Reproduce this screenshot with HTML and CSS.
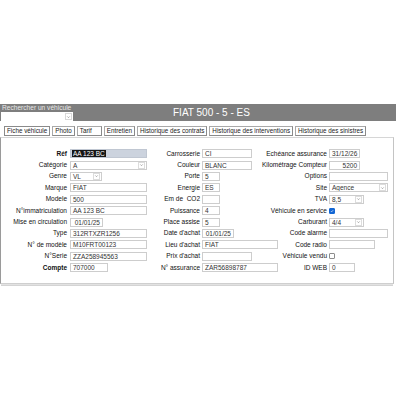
FILE: index.html
```html
<!DOCTYPE html>
<html lang="fr">
<head>
<meta charset="utf-8">
<title>FIAT 500 - 5 - ES</title>
<link rel="stylesheet" href="styles.css">
</head>
<body>
<div class="app">
  <div class="topbar">
    <div class="search">
      <div class="search-label">Rechercher un véhicule</div>
      <div class="combo"><span class="arrow"><svg viewBox="0 0 6 6" width="6" height="6"><path d="M1.5 2.3 L3 3.8 L4.5 2.3" fill="none" stroke="#777" stroke-width="0.7"/></svg></span></div>
    </div>
    <div class="title">FIAT 500 - 5 - ES</div>
  </div>

  <div class="tabs">
    <div class="tab active">Fiche véhicule</div>
    <div class="tab">Photo</div>
    <div class="tab tab-wide">Tarif</div>
    <div class="tab">Entretien</div>
    <div class="tab">Historique des contrats</div>
    <div class="tab">Historique des interventions</div>
    <div class="tab">Historique des sinistres</div>
  </div>

  <div class="panel">
    <div class="form">
      <div class="col col1">
        <label class="bold"><span>Réf</span></label><div class="field w77 sel-field"><span class="sel">AA 123 BC</span></div>
        <label><span>Catégorie</span></label><div class="field w77 select">A<span class="arrow"><svg viewBox="0 0 6 6" width="6" height="6"><path d="M1.5 2.3 L3 3.8 L4.5 2.3" fill="none" stroke="#777" stroke-width="0.7"/></svg></span></div>
        <label><span>Genre</span></label><div class="field w32 select">VL<span class="arrow"><svg viewBox="0 0 6 6" width="6" height="6"><path d="M1.5 2.3 L3 3.8 L4.5 2.3" fill="none" stroke="#777" stroke-width="0.7"/></svg></span></div>
        <label><span>Marque</span></label><div class="field w77">FIAT</div>
        <label><span>Modele</span></label><div class="field w77">500</div>
        <label><span>N°immatriculation</span></label><div class="field w77">AA 123 BC</div>
        <label><span>Mise en circulation</span></label><div class="field w33 right">01/01/25</div>
        <label><span>Type</span></label><div class="field w77">312RTXZR1256</div>
        <label><span>N° de modèle</span></label><div class="field w77">M10FRT00123</div>
        <label><span>N°Serie</span></label><div class="field w77">ZZA258945563</div>
        <label class="bold"><span>Compte</span></label><div class="field w38">707000</div>
      </div>

      <div class="col col2">
        <label><span>Carrosserie</span></label><div class="field w50">CI</div>
        <label><span>Couleur</span></label><div class="field w50">BLANC</div>
        <label><span>Porte</span></label><div class="field w18">5</div>
        <label><span>Energie</span></label><div class="field w18">ES</div>
        <label><span>Em de&nbsp; CO2</span></label><div class="field w18"></div>
        <label><span>Puissance</span></label><div class="field w18">4</div>
        <label><span>Place assise</span></label><div class="field w18">5</div>
        <label><span>Date d'achat</span></label><div class="field w32 right">01/01/25</div>
        <label><span>Lieu d'achat</span></label><div class="field w76">FIAT</div>
        <label><span>Prix d'achat</span></label><div class="field w50"></div>
        <label><span>N° assurance</span></label><div class="field w76">ZAR56898787</div>
      </div>

      <div class="col col3">
        <label><span>Echéance assurance</span></label><div class="field w31 right">31/12/26</div>
        <label><span>Kilométrage Compteur</span></label><div class="field w31 right">5200</div>
        <label><span>Options</span></label><div class="field w59"></div>
        <label><span>Site</span></label><div class="field w59 select">Agence<span class="arrow"><svg viewBox="0 0 6 6" width="6" height="6"><path d="M1.5 2.3 L3 3.8 L4.5 2.3" fill="none" stroke="#777" stroke-width="0.7"/></svg></span></div>
        <label><span>TVA</span></label><div class="field w35 select">8,5<span class="arrow"><svg viewBox="0 0 6 6" width="6" height="6"><path d="M1.5 2.3 L3 3.8 L4.5 2.3" fill="none" stroke="#777" stroke-width="0.7"/></svg></span></div>
        <label><span>Véhicule en service</span></label><div class="check checked"><svg viewBox="0 0 6 6" width="6" height="6"><path d="M1.2 3 L2.5 4.3 L4.8 1.7" fill="none" stroke="#fff" stroke-width="0.9"/></svg></div>
        <label><span>Carburant</span></label><div class="field w35 select">4/4<span class="arrow"><svg viewBox="0 0 6 6" width="6" height="6"><path d="M1.5 2.3 L3 3.8 L4.5 2.3" fill="none" stroke="#777" stroke-width="0.7"/></svg></span></div>
        <label><span>Code alarme</span></label><div class="field w59"></div>
        <label><span>Code radio</span></label><div class="field w46"></div>
        <label><span>Véhicule vendu</span></label><div class="check"></div>
        <label><span>ID WEB</span></label><div class="field w26">0</div>
      </div>
    </div>
  </div>
</div>
</body>
</html>
```

FILE: styles.css
```css
* { box-sizing: border-box; }

html, body {
  margin: 0;
  padding: 0;
  background: #ffffff;
}

body {
  font-family: "Liberation Sans", Arial, sans-serif;
  color: #111;
}

.app {
  width: 396px;
  height: 396px;
  padding-top: 104px;
}

/* top bar */
.topbar {
  height: 17px;
  background: #7e7e7e;
  display: flex;
  align-items: stretch;
}

.search {
  width: 74px;
  display: flex;
  flex-direction: column;
  padding-left: 1px;
}

.search-label {
  font-size: 6.6px;
  line-height: 7px;
  color: #e8e8e8;
  padding-left: 1px;
  height: 7px;
  white-space: nowrap;
}

.combo {
  margin-top: 1px;
  height: 9px;
  width: 72px;
  background: #fff;
  position: relative;
}

.combo .arrow {
  position: absolute;
  right: 1px;
  top: 1px;
  width: 7px;
  height: 7px;
  border: 1px solid #d8d8d8;
  display: flex;
  align-items: center;
  justify-content: center;
}

.title {
  margin-left: 99px;
  font-size: 10px;
  line-height: 17px;
  color: #ffffff;
}

/* tabs */
.tabs {
  display: flex;
  gap: 2px;
  padding: 5px 0 0 4px;
  height: 16px;
}

.tab {
  height: 10px;
  padding: 0 2px;
  border: 1px solid #a9a9a9;
  border-right-color: #8a8a8a;
  border-bottom-color: #8a8a8a;
  background: #ffffff;
  font-size: 6.3px;
  line-height: 8px;
  color: #222;
  white-space: nowrap;
}

.tab.active {
  border-color: #8a8a8a;
}

.tab-wide {
  min-width: 25px;
}

/* panel */
.panel {
  width: 394px;
  height: 147px;
  border: 1px solid #d6d6d6;
  border-left-color: #9a9a9a;
  border-right-color: #c4c4c4;
  border-bottom: 1px solid #cfcfcf;
  box-shadow: 0 2px 0 -1px #e2e2e2, 0 3px 0 -1px #d4d4d4;
  padding-top: 10px;
}

.form {
  display: flex;
}

.col {
  display: grid;
  grid-auto-rows: 11.4px;
  align-items: center;
}

.col1 { width: 149px; grid-template-columns: 66px 80px; column-gap: 3px; }
.col2 { width: 130px; grid-template-columns: 50px 78px; column-gap: 2px; }
.col3 { width: 113px; grid-template-columns: 47px 64px; column-gap: 2px; }

label {
  display: flex;
  justify-content: flex-end;
  font-size: 6.5px;
  line-height: 8px;
  white-space: nowrap;
  color: #111;
  min-width: 0;
}

label span {
  flex: none;
}

label.bold { font-weight: bold; }

.field {
  height: 9px;
  border: 1px solid #cdcdcd;
  background: #fff;
  font-size: 6.5px;
  line-height: 7px;
  padding: 0 2px;
  color: #333;
  white-space: nowrap;
  overflow: hidden;
  position: relative;
}

.field.right { text-align: right; }

.sel-field {
  background: #ccd3de;
  border-color: #c0c7d2;
  padding-left: 1px;
}

.sel {
  background: #161616;
  color: #fff;
  padding: 0 1px;
  display: inline-block;
  line-height: 7px;
}

.select .arrow {
  position: absolute;
  right: 1px;
  top: 0;
  width: 7px;
  height: 7px;
  border: 1px solid #dcdcdc;
  display: flex;
  align-items: center;
  justify-content: center;
}

.check {
  width: 6px;
  height: 6px;
  border: 1px solid #8d8d8d;
  border-radius: 1px;
  background: #fff;
  display: flex;
  align-items: center;
  justify-content: center;
}

.check.checked {
  background: #1467d4;
  border-color: #1467d4;
}

.check svg { display: block; }

.w18 { width: 18px; }
.w26 { width: 26px; }
.w31 { width: 31px; }
.w32 { width: 32px; }
.w33 { width: 33px; }
.w35 { width: 35px; }
.w38 { width: 38px; }
.w46 { width: 46px; }
.w50 { width: 50px; }
.w59 { width: 59px; }
.w76 { width: 76px; }
.w77 { width: 77px; }
```
